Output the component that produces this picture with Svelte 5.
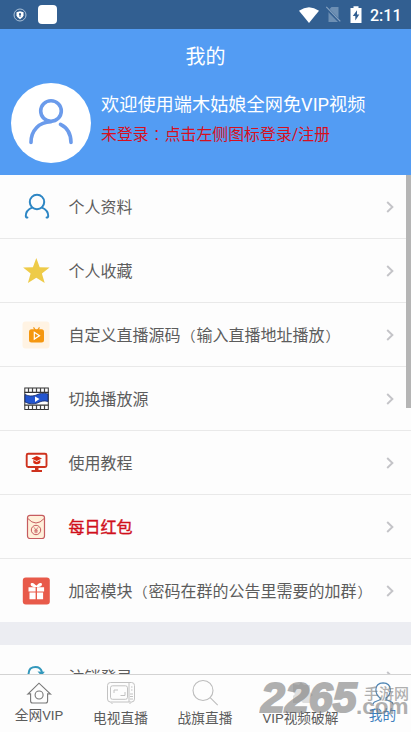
<script lang="ts">
  interface MenuItem {
    icon: string;
    label: string;
    highlight?: boolean;
  }

  interface Tab {
    icon: string;
    label: string;
    width: number;
    active?: boolean;
    raised?: boolean;
  }

  const menu: MenuItem[] = [
    { icon: "profile", label: "个人资料" },
    { icon: "star", label: "个人收藏" },
    { icon: "tv", label: "自定义直播源码（输入直播地址播放）" },
    { icon: "film", label: "切换播放源" },
    { icon: "tutorial", label: "使用教程" },
    { icon: "packet", label: "每日红包", highlight: true },
    { icon: "gift", label: "加密模块（密码在群的公告里需要的加群）" },
  ];

  const tabs: Tab[] = [
    { icon: "home", label: "全网VIP", width: 78, raised: true },
    { icon: "live", label: "电视直播", width: 85 },
    { icon: "search", label: "战旗直播", width: 84 },
    { icon: "block", label: "VIP视频破解", width: 107 },
    { icon: "me", label: "我的", width: 57, active: true, raised: true },
  ];

  // brackets are centred in their cell, so they get their own font
  const split = (text: string) => text.split(/([（）：])/).filter((part) => part);
</script>

{#snippet mixed(text: string)}
  {#each split(text) as part}{#if /[（）：]/.test(part)}<span class="punct">{part}</span>{:else}{part}{/if}{/each}
{/snippet}

{#snippet chevron()}
  <svg class="chevron" viewBox="0 0 8 12" width="8" height="12">
    <path d="M1.2 1 6.4 6 1.2 11" fill="none" stroke="#c4c4c8" stroke-width="1.9" />
  </svg>
{/snippet}

{#snippet menuIcon(name: string)}
  <svg class="icon" viewBox="0 0 28 28" width="28" height="28">
    {#if name === "profile"}
      <g fill="none" stroke="#2d86c4" stroke-width="2" stroke-linecap="round">
        <circle cx="15" cy="9" r="7.2" />
        <path d="M10 14.6C6 16.300 3.800 19 3.800 23q0 1.600 1.600 1.500M20 14.600C24 16.300 26.200 19 26.200 23q0 1.600-1.600 1.500" />
      </g>
    {:else if name === "star"}
      <path
        d="M14.3 1 17.700 10.200 27.600 10.600 19.900 16.600 22.700 26 14.300 20.800 5.900 26 8.600 16.600 1.100 10.600l9.800-.4z"
        fill="#eecb48" />
    {:else if name === "tv"}
      <rect x="0.5" y="0.5" width="27" height="27" rx="3" fill="#fff3e3" />
      <path d="m11.5 6.3 2 3M17.5 6.3l-2 3" stroke="#f29a1c" stroke-width="1.2" />
      <rect x="7" y="8.3" width="15" height="13.2" rx="2.5" fill="#f5970f" />
      <path d="m12.300 11.3 5.2 3.4-5.2 3.4z" fill="none" stroke="#fff" stroke-width="1.2" />
    {:else if name === "film"}
      <rect x="2.8" y="3" width="23.5" height="21.5" fill="#fff" stroke="#333" />
      <path d="M2.500 7.4h24M2.500 20.2h24" stroke="#333" stroke-width="1.2" />
      <path d="M6.500 3v4.5m4-4.5v4.5m4-4.5v4.5m4-4.5v4.5m4-4.5v4.5M6.500 20v4.5m4-4.5v4.5m4-4.5v4.5m4-4.5v4.5m4-4.5v4.5" stroke="#444" stroke-width="1.2" />
      <path
        d="M3 9.5c4 1.8 6.5 1.7 10 1 4.500-2 8.500-3 13-1.500v7.500c-4-1.300-7-.3-10.500 1.500-4 1.300-8.500 1.200-12.500-1z"
        fill="#2355cf"
        stroke="#152a65"
        stroke-width=".8" />
      <path d="m13 11.500 4.500 2.600-4.500 2.800z" fill="#fff" />
    {:else if name === "tutorial"}
      <rect x="4.700" y="4.800" width="19.800" height="13.200" rx="1.500" fill="none" stroke="#ce321e" stroke-width="1.900" />
      <path d="M13 18.300h3.500V21H20v2H9.500v-2H13z" fill="#ce321e" />
      <path d="m14.700 7.100 5.300 2.400-5.300 2.600-5.200-2.600zM11.300 11.100l3.400 1.800 3.600-1.800V14q-3.500 2.500-7 0z" fill="#d72b12" />
    {:else if name === "packet"}
      <rect x="5.500" y="2.300" width="17" height="23.200" rx="2.500" fill="#fff0da" stroke="#c65c60" stroke-width="1.200" />
      <path d="M5.800 5.500q8.200 9 16.400 0" fill="none" stroke="#c65c60" />
      <circle cx="14" cy="17" r="4.700" fill="none" stroke="#c65c60" />
      <path d="m12 14.300 2 2.700 2-2.700M14 17v3.200M12.200 17.300h3.600M12.200 18.900h3.600" fill="none" stroke="#c65c60" stroke-width=".8" />
    {:else if name === "gift"}
      <rect x="0.800" y="0.500" width="27" height="27" rx="3" fill="#e85a4a" />
      <g fill="#fff">
        <path d="M6.500 10.300h7.100v4.200H6.500zM15 10.300h7.100v4.200H15zM7.500 15.600h6.100v6.600H7.500zM15 15.600h6.100v6.600H15z" />
      </g>
      <path d="M14.100 9.500C7.300 9.500 8.800 5.200 11.500 7zM14.500 9.500c6.800 0 5.300-4.300 2.600-2.500z" fill="#fff" stroke="#fff" stroke-width="1.200" />
    {:else}
      <path d="M9 18C5.500 14 6 8 8.500 5.500q2-1.500 5-1.500 5 0 6.500 5" fill="none" stroke="#3398bc" stroke-width="2" />
      <path d="m15.500 8.500 7.300.2-3.200 4.300z" fill="#3398bc" />
    {/if}
  </svg>
{/snippet}

{#snippet tabIcon(name: string)}
  <svg viewBox="0 0 30 28" width="30" height="28">
    {#if name === "home"}
      <g fill="none" stroke="#777" stroke-width="1.100">
        <path d="M6.600 14.800 3.900 15.100 15 4.200 26.500 15.100l-2.900-.3v7.200q0 2-2 2h-13q-2 0-2-2z" />
        <circle cx="15.100" cy="16" r="4" />
      </g>
    {:else if name === "live"}
      <g fill="none" stroke="#c2c2c2">
        <rect x="1.500" y="3.500" width="27" height="19.500" rx="3" />
        <rect x="4.500" y="6.800" width="17" height="13.500" rx="2" />
        <path d="M23 4v19M8 14v-3h4M14.500 16.500H19V13M25 8h1.500M25 11h1.500M24 15h3M24 17.500h3M24 20h3M5 23.500l1.500 1.500M25 23.500 23.500 25" />
      </g>
    {:else if name === "search"}
      <g fill="none" stroke="#bcbcbc" stroke-width="1.100">
        <circle cx="13" cy="11.500" r="10" />
        <path d="m20.200 18.700 7.500 7.500" />
      </g>
    {:else if name === "block"}
      <path d="m7 5 6 1 2-3 3 3h6v7l3 3-3 2v6h-7l-2-2-2 2H7v-7l2-2-2-2z" fill="#dedede" />
    {:else}
      <g fill="none" stroke="#5187b5" stroke-width="1.200">
        <path d="M12.200 18.500v2.200L6.500 23q-1.300.8-1.300 2.300M18 18.500v2.200l5.700 2.300q1.300.8 1.300 2.300" />
        <path d="M12.200 19C7 15.500 5 4.300 15.100 3.800 25.200 4.300 23.200 15.500 18 19" />
      </g>
    {/if}
  </svg>
{/snippet}

<div class="screen">
  <div class="status">
    <svg class="shield" viewBox="0 0 14 14" width="14" height="14">
      <circle cx="7" cy="7" r="6" fill="none" stroke="#c6d8e9" stroke-width=".8" />
      <path d="M3.500 4.300 7 3.300l3.500 1v3Q10.300 9.800 7 11.200 3.700 9.800 3.500 7.300z" fill="#fff" />
      <circle cx="7" cy="6.200" r="1.100" fill="#325f91" />
      <path d="M7 6.500V9" stroke="#325f91" />
    </svg>
    <span class="app-badge"></span>
    <svg class="wifi" viewBox="0 0 20 16" width="20" height="16">
      <path d="M0 3.700Q10-3.400 20 3.700L10 16z" fill="#fff" />
    </svg>
    <svg class="sim" viewBox="0 0 16 17" width="16" height="17">
      <path d="M6.500 1H13.500V16H3.500V4z" fill="#6d8fb3" />
      <path d="m.8 1.300 14 14.500" stroke="#325f91" stroke-width="3" />
      <path d="m1.300.8 14 14.500" stroke="#86a2c0" stroke-width="1.200" />
    </svg>
    <svg class="battery" viewBox="0 0 12 17" width="12" height="17">
      <path d="M.5 2h3V.3h5V2h3v15H.5z" fill="#fff" />
      <path d="M7 4.200 2.800 10h2.500v4.500L9.300 8.500H7z" fill="#325f91" />
    </svg>
    <span class="clock">2:11</span>
  </div>

  <header>
    <h1>我的</h1>
    <div class="user">
      <div class="avatar">
        <svg viewBox="0 0 80 80" width="80" height="80">
          <g fill="none" stroke="#6b9beb" stroke-width="3.600" stroke-linecap="round">
            <circle cx="40" cy="28" r="10.300" />
            <path d="M20 59.500c0-12 8-20.500 20-20.700M49.500 41.300C56 44.500 60 51 60 59.500" />
          </g>
        </svg>
      </div>
      <div class="greeting">
        <p class="welcome">欢迎使用端木姑娘全网免VIP视频</p>
        <p class="login">{@render mixed("未登录：点击左侧图标登录/注册")}</p>
      </div>
    </div>
  </header>

  <main>
    <ul>
      {#each menu as item}
        <li class:highlight={item.highlight}>
          {@render menuIcon(item.icon)}
          <span class="label">{@render mixed(item.label)}</span>
          {@render chevron()}
        </li>
      {/each}
    </ul>
    <div class="gap"></div>
    <ul>
      <li>
        {@render menuIcon("logout")}
        <span class="label">注销登录</span>
        {@render chevron()}
      </li>
    </ul>
    <div class="scrollbar"></div>
  </main>

  <nav>
    {#each tabs as tab}
      <div class="tab" class:active={tab.active} class:raised={tab.raised} style="width: {tab.width}px">
        {@render tabIcon(tab.icon)}
        <span>{tab.label}</span>
      </div>
    {/each}
  </nav>

  <div class="watermark">
    <span class="number">2265</span>
    <div class="site">
      <span class="cn">手游网</span>
      <span class="com">.com</span>
    </div>
  </div>
</div>

<style>
  :global(body) {
    margin: 0;
  }

  .screen {
    position: relative;
    display: flex;
    flex-direction: column;
    width: 411px;
    height: 732px;
    overflow: hidden;
    background: #fdfdfd;
    font-family: Roboto, "Noto Sans CJK SC", sans-serif;
    color: #5c5c5c;
  }

  .punct {
    display: inline-block;
    width: 16px;
    font-family: "Noto Sans CJK TC", sans-serif;
    font-size: 14px;
    line-height: 1;
    text-align: center;
  }

  .status {
    display: flex;
    align-items: center;
    flex: none;
    box-sizing: border-box;
    height: 29px;
    padding: 0 9px 0 13px;
    background: #325f91;
    color: #fff;
  }

  .app-badge {
    width: 19px;
    height: 19px;
    margin-left: 11px;
    border-radius: 4px;
    background: #fff;
  }

  .wifi {
    margin-left: auto;
  }

  .sim {
    margin-left: 6px;
  }

  .battery {
    margin-left: 9px;
  }

  .clock {
    width: 32px;
    margin-left: 8px;
    padding-top: 1px;
    font-size: 16px;
    font-weight: 500;
    white-space: nowrap;
  }

  header {
    flex: none;
    height: 146px;
    background: #539cf3;
    color: #fff;
  }

  h1 {
    margin: 0;
    height: 54px;
    line-height: 56px;
    font-size: 20px;
    font-weight: 400;
    text-align: center;
  }

  .user {
    display: flex;
    padding-left: 11px;
  }

  .avatar {
    width: 80px;
    height: 80px;
    border-radius: 50%;
    background: #fff;
  }

  .greeting {
    margin-left: 10px;
    padding-top: 7px;
    white-space: nowrap;
  }

  .greeting p {
    margin: 0;
    height: 30px;
    line-height: 30px;
  }

  .greeting .welcome {
    font-size: 18.2px;
  }

  .greeting .login {
    font-size: 15.9px;
    color: #d8101e;
  }

  main {
    position: relative;
    flex: 1;
    min-height: 0;
    overflow: hidden;
  }

  ul {
    margin: 0;
    padding: 0;
    list-style: none;
  }

  li {
    display: flex;
    align-items: center;
    box-sizing: border-box;
    height: 64px;
    padding: 0 17px 0 22px;
    border-bottom: 1px solid #e9e9e9;
  }

  li:last-child {
    height: 63px;
    border-bottom: 0;
  }

  .icon {
    flex: none;
  }

  .label {
    flex: 1;
    margin-left: 18.5px;
    padding-bottom: 2px;
    font-size: 16px;
    white-space: nowrap;
  }

  .highlight .label {
    color: #d0101c;
    -webkit-text-stroke: 0.4px #d0101c;
  }

  .chevron {
    flex: none;
  }

  .gap {
    height: 23px;
    background: #ecedf2;
  }

  .scrollbar {
    position: absolute;
    top: 0;
    right: 0;
    width: 5px;
    height: 233px;
    background: #b5b5b5;
  }

  nav {
    display: flex;
    flex: none;
    height: 57px;
    border-top: 1px solid #d3d3d3;
    background: #fdfdfd;
  }

  .tab {
    display: flex;
    flex-direction: column;
    align-items: center;
    padding-top: 4px;
    font-size: 13.7px;
    box-sizing: border-box;
  }

  .tab svg {
    flex: none;
  }

  .tab span {
    line-height: 20px;
    margin-top: 1px;
    white-space: nowrap;
  }

  .tab.raised span {
    margin-top: -2px;
  }

  .tab.active {
    color: #3e80bd;
  }

  .watermark {
    position: absolute;
    left: 261px;
    top: 679px;
    display: flex;
    color: #777;
    opacity: 0.58;
    font-family: "Liberation Sans", sans-serif;
    font-weight: 700;
  }

  .number {
    width: 95px;
    font-size: 43px;
    font-style: italic;
    line-height: 37px;
    -webkit-text-stroke: 2px #777;
  }

  .site {
    display: flex;
    flex-direction: column;
  }

  .cn {
    height: 16px;
    margin-left: 8px;
    font-family: "Noto Sans CJK SC", sans-serif;
    font-size: 15px;
    font-weight: 500;
    line-height: 27px;
    white-space: nowrap;
  }

  .com {
    font-size: 22.5px;
    line-height: 24px;
  }
</style>
